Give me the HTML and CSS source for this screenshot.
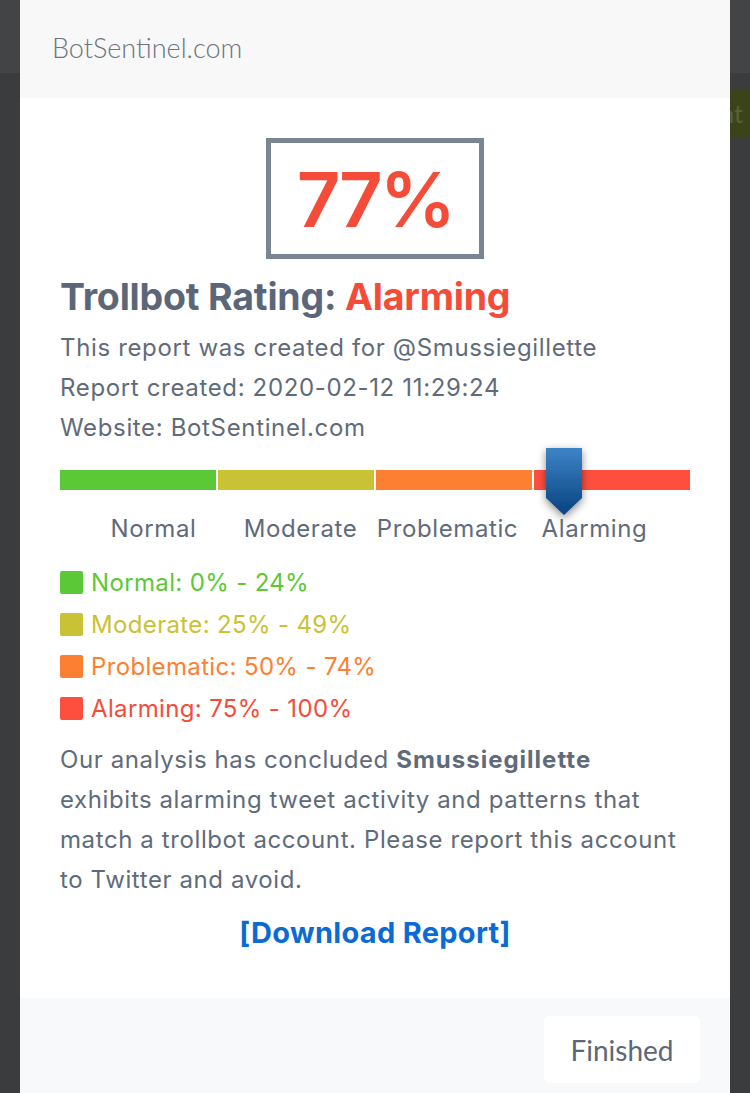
FILE: index.html
```html
<!DOCTYPE html>
<html>
<head>
<meta charset="utf-8">
<link rel="stylesheet" href="styles.css">
</head>
<body>
<div class="backdrop">
  <div class="bd-bar"></div>
  <div class="bd-row"><span class="bd-btn">Report Account</span></div>
</div>
<div class="modal">
  <div class="modal-header">BotSentinel.com</div>
  <div class="modal-body">
    <div class="score">77%</div>
    <h2 class="rating">Trollbot Rating: <span class="red">Alarming</span></h2>
    <div class="info">This report was created for @Smussiegillette</div>
    <div class="info">Report created: 2020-02-12 11:29:24</div>
    <div class="info">Website: BotSentinel.com</div>
    <div class="meter">
      <div class="seg green"></div>
      <div class="seg yellow"></div>
      <div class="seg orange"></div>
      <div class="seg redbg"></div>
      <svg class="marker" width="56" height="90" viewBox="0 0 56 90">
        <defs>
          <linearGradient id="mg" x1="0" y1="0" x2="0" y2="1">
            <stop offset="0" stop-color="#3e84c6"/>
            <stop offset="1" stop-color="#07427f"/>
          </linearGradient>
          <filter id="sh" x="-50%" y="-30%" width="200%" height="160%">
            <feDropShadow dx="0" dy="3" stdDeviation="4" flood-color="#000" flood-opacity="0.45"/>
          </filter>
        </defs>
        <path d="M10 10 H46 V60 L28 77 L10 60 Z" fill="url(#mg)" filter="url(#sh)"/>
      </svg>
    </div>
    <div class="labels">
      <span>Normal</span><span>Moderate</span><span>Problematic</span><span>Alarming</span>
    </div>
    <ul class="legend">
      <li class="c-green"><i class="sq green"></i>Normal: 0% - 24%</li>
      <li class="c-yellow"><i class="sq yellow"></i>Moderate: 25% - 49%</li>
      <li class="c-orange"><i class="sq orange"></i>Problematic: 50% - 74%</li>
      <li class="c-red"><i class="sq redbg"></i>Alarming: 75% - 100%</li>
    </ul>
    <p class="summary">Our analysis has concluded <b>Smussiegillette</b><br>exhibits alarming tweet activity and patterns that<br>match a trollbot account. Please report this account<br>to Twitter and avoid.</p>
    <div class="download"><a href="#">[Download Report]</a></div>
  </div>
  <div class="modal-footer"><span class="finish">Finished</span></div>
</div>
</body>
</html>
```

FILE: styles.css
```css
html, body {
  margin: 0;
  padding: 0;
}
body {
  width: 750px;
  height: 1093px;
  overflow: hidden;
  background: #3b3c3e;
  position: relative;
  font-family: Inter, "Noto Sans", sans-serif;
}
.bd-bar {
  height: 73px;
  background: #434446;
}
.bd-row {
  display: flex;
  justify-content: flex-end;
  margin-top: 17px;
}
.bd-btn {
  height: 47px;
  line-height: 47px;
  padding: 0 7px 0 20px;
  background: #3b4419;
  color: #56613a;
  font-family: Lato, sans-serif;
  font-size: 25px;
}
.modal {
  position: absolute;
  left: 20px;
  top: 0;
  width: 710px;
  height: 1093px;
  background: #fff;
  display: flex;
  flex-direction: column;
}
.modal-header {
  height: 98px;
  background: #f8f8f8;
  display: flex;
  align-items: center;
  padding: 0 0 3px 32px;
  font-family: Lato, sans-serif;
  font-weight: 300;
  font-size: 27px;
  color: #6b7480;
  box-sizing: border-box;
}
.modal-body {
  flex: 1;
  padding: 0 40px;
}
.score {
  width: 208px;
  height: 111px;
  border: 5px solid #7a8593;
  margin: 40px auto 0;
  display: flex;
  align-items: center;
  justify-content: center;
  font-size: 76px;
  font-weight: 600;
  color: #f54c3a;
  letter-spacing: -3px;
}
.rating {
  margin: 14px 0 7px;
  font-size: 37.5px;
  line-height: 48px;
  font-weight: 700;
  color: #5b6779;
  letter-spacing: -0.2px;
}
.red { color: #f54c3a; }
.info {
  font-size: 24px;
  line-height: 40px;
  color: #5f6b7a;
  letter-spacing: 0.65px;
}
.meter {
  position: relative;
  margin-top: 22px;
  height: 20px;
  display: flex;
  gap: 2px;
}
.seg { flex: 1; }
.green { background: #5ac837; }
.yellow { background: #c9c235; }
.orange { background: #fd7f32; }
.redbg { background: #fd4e3e; }
.marker {
  position: absolute;
  left: 476px;
  top: -32px;
}
.labels {
  margin-top: 19px;
  padding-left: 20px;
  display: grid;
  grid-template-columns: repeat(4, 147px);
  text-align: center;
  font-size: 24px;
  line-height: 40px;
  color: #5f6b7a;
  letter-spacing: 0.6px;
}
.legend {
  list-style: none;
  margin: 12px 0 0;
  padding: 0;
}
.legend li {
  display: flex;
  align-items: center;
  height: 42px;
  font-size: 24px;
  letter-spacing: 0.35px;
}
.sq {
  width: 23px;
  height: 23px;
  border-radius: 2px;
  margin-right: 8px;
}
.c-green { color: #5ac837; }
.c-yellow { color: #c9c235; }
.c-orange { color: #fd7f32; }
.c-red { color: #f54c3a; }
.summary {
  margin: 11px 0 0;
  font-size: 24px;
  line-height: 40px;
  color: #5f6b7a;
  letter-spacing: 0.6px;
  white-space: nowrap;
}
.summary b { font-weight: 700; letter-spacing: 1px; }
.download {
  margin-top: 13px;
  text-align: center;
  line-height: 40px;
}
.download a {
  font-size: 29px;
  font-weight: 700;
  color: #0b6bd3;
  text-decoration: none;
  letter-spacing: 0.3px;
}
.modal-footer {
  height: 95px;
  background: #f8f9fa;
  display: flex;
  justify-content: flex-end;
  align-items: flex-start;
  padding: 18px 30px 0 0;
  box-sizing: border-box;
}
.finish {
  width: 156px;
  height: 67px;
  background: #fff;
  border-radius: 5px;
  display: flex;
  align-items: center;
  justify-content: center;
  font-family: Lato, sans-serif;
  font-size: 28px;
  color: #5b6779;
}
```
